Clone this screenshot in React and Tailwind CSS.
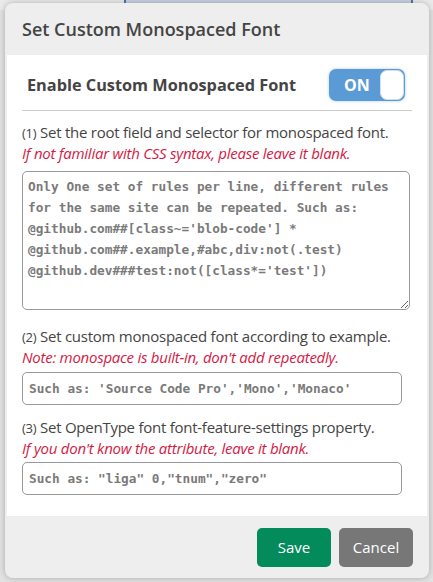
import React from 'react';

const Label = ({ num, text, note, top }) => (
  <div className={top}>
    <p className="text-[15px] leading-[20px] tracking-[-0.25px] text-[#444]">
      <span className="text-[13px]">({num})</span> {text}
    </p>
    <p className="text-[15px] leading-[21px] italic tracking-[-0.25px] text-[#d41a44]">{note}</p>
  </div>
);

const monoPlaceholder =
  "placeholder:text-[#7a7a7a] font-['DejaVu_Sans_Mono',monospace] font-bold text-[12.75px]";

export default function App() {
  return (
    <div className="relative h-[582px] w-[433px] overflow-hidden bg-[#e2e2e2] font-['Open_Sans','Noto_Sans',sans-serif]">
      {/* underlying page strip */}
      <div className="flex h-[10px]">
        <div className="w-[124px] bg-[#ebebeb]" />
        <div className="w-[289px] border-x-2 border-[#4a78b0] bg-[#c9d3e0]" />
        <div className="flex-1 bg-[#ebebeb]" />
      </div>
      <div className="absolute left-[5px] top-[3px] w-[424px] rounded-[8px] bg-[#eeeeee] shadow-[0_0_6px_rgba(0,0,0,0.25)]">
        <div className="flex h-[52px] items-center px-[17px]">
          <h1 className="text-[18px] font-semibold text-[#444]">Set Custom Monospaced Font</h1>
        </div>
        <div className="mx-[2px] flex flex-col bg-white px-[15px] pb-[21px] pt-[14px]">
          <div className="flex items-center justify-between border-b border-[#cccccc] pb-[9px] pl-[5px] pr-[7px]">
            <span className="text-[16.3px] font-bold text-[#444]">Enable Custom Monospaced Font</span>
            <button className="flex h-[32px] w-[76px] items-center rounded-[7px] bg-[#5b9bd5] pl-[15px] pr-[1px] shadow-[0_0_3px_rgba(91,155,213,0.5)]">
              <span className="text-[16px] font-bold text-white">ON</span>
              <span className="ml-auto h-[30px] w-[24px] rounded-[7px] border border-[#cfe0f0] bg-white" />
            </button>
          </div>

          <Label
            top="mt-[11px]"
            num="1"
            text="Set the root field and selector for monospaced font."
            note="If not familiar with CSS syntax, please leave it blank."
          />
          <textarea
            className={`mt-[7px] block h-[139px] w-[388px] resize-y rounded-[5px] border border-[#999] px-[5px] py-[4px] leading-[21px] outline-none ${monoPlaceholder}`}
            placeholder={
              "Only One set of rules per line, different rules for the same site can be repeated. Such as:\n@github.com##[class~='blob-code'] *\n@github.com##.example,#abc,div:not(.test)\n@github.dev###test:not([class*='test'])"
            }
          />

          <Label
            top="mt-[16px]"
            num="2"
            text="Set custom monospaced font according to example."
            note="Note: monospace is built-in, don't add repeatedly."
          />
          <input
            className={`mt-[4px] block h-[33px] w-[380px] rounded-[5px] border border-[#999] px-[6px] outline-none ${monoPlaceholder}`}
            placeholder="Such as: 'Source Code Pro','Mono','Monaco'"
          />

          <Label
            top="mt-[12px]"
            num="3"
            text="Set OpenType font font-feature-settings property."
            note="If you don't know the attribute, leave it blank."
          />
          <input
            className={`mt-[3px] block h-[33px] w-[380px] rounded-[5px] border border-[#999] px-[6px] outline-none ${monoPlaceholder}`}
            placeholder={'Such as: "liga" 0,"tnum","zero"'}
          />
        </div>
        <div className="flex h-[62px] items-center justify-end gap-[8px] pr-[16px]">
          <button className="h-[39px] w-[74px] rounded-[5px] bg-[#038b5b] text-[15px] text-white">Save</button>
          <button className="h-[39px] w-[74px] rounded-[5px] bg-[#777777] text-[15px] text-white">Cancel</button>
        </div>
      </div>
    </div>
  );
}
